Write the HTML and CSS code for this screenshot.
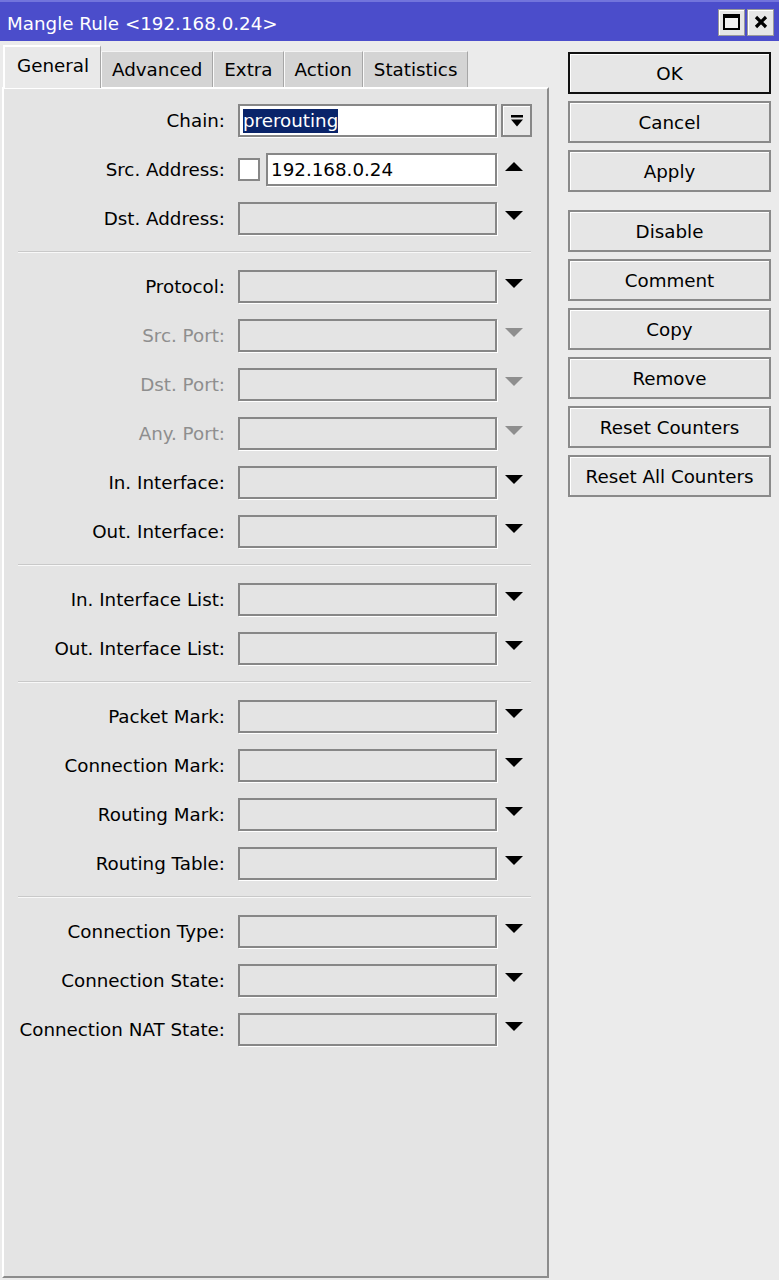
FILE: index.html
```html
<!DOCTYPE html>
<html lang="en">
<head>
    <meta charset="UTF-8">
    <title>Mangle Rule</title>
    <link rel="stylesheet" href="styles.css">
</head>
<body>
    <div class="window">
        <div class="titlebar">
            <span class="title">Mangle Rule &lt;192.168.0.24&gt;</span>
            <div class="win-btns">
                <span class="win-btn"><span class="max-icon"></span></span>
                <span class="win-btn">
                    <svg width="14" height="14" viewBox="0 0 14 14"><path d="M2 2 L12 12 M12 2 L2 12" stroke="#000" stroke-width="3.2"/></svg>
                </span>
            </div>
        </div>

        <div class="body">
            <div class="main">
                <div class="tabs">
                    <span class="tab active">General</span>
                    <span class="tab">Advanced</span>
                    <span class="tab">Extra</span>
                    <span class="tab">Action</span>
                    <span class="tab">Statistics</span>
                </div>

                <div class="panel">
                    <div class="row">
                        <label>Chain:</label>
                        <div class="field white"><span class="selected">prerouting</span></div>
                        <span class="drop-btn">
                            <svg width="14" height="14" viewBox="0 0 14 14"><rect x="1" y="1" width="12" height="2.5" fill="#000"/><path d="M1 5.5 H13 L7 12.5 Z" fill="#000"/></svg>
                        </span>
                    </div>
                    <div class="row">
                        <label>Src. Address:</label>
                        <span class="check"></span>
                        <div class="field white short">192.168.0.24</div>
                        <span class="arrow"><span class="tri up"></span></span>
                    </div>
                    <div class="row">
                        <label>Dst. Address:</label>
                        <div class="field"></div>
                        <span class="arrow"><span class="tri"></span></span>
                    </div>

                    <div class="sep"></div>

                    <div class="row">
                        <label>Protocol:</label>
                        <div class="field"></div>
                        <span class="arrow"><span class="tri"></span></span>
                    </div>
                    <div class="row disabled">
                        <label>Src. Port:</label>
                        <div class="field"></div>
                        <span class="arrow"><span class="tri"></span></span>
                    </div>
                    <div class="row disabled">
                        <label>Dst. Port:</label>
                        <div class="field"></div>
                        <span class="arrow"><span class="tri"></span></span>
                    </div>
                    <div class="row disabled">
                        <label>Any. Port:</label>
                        <div class="field"></div>
                        <span class="arrow"><span class="tri"></span></span>
                    </div>
                    <div class="row">
                        <label>In. Interface:</label>
                        <div class="field"></div>
                        <span class="arrow"><span class="tri"></span></span>
                    </div>
                    <div class="row">
                        <label>Out. Interface:</label>
                        <div class="field"></div>
                        <span class="arrow"><span class="tri"></span></span>
                    </div>

                    <div class="sep"></div>

                    <div class="row">
                        <label>In. Interface List:</label>
                        <div class="field"></div>
                        <span class="arrow"><span class="tri"></span></span>
                    </div>
                    <div class="row">
                        <label>Out. Interface List:</label>
                        <div class="field"></div>
                        <span class="arrow"><span class="tri"></span></span>
                    </div>

                    <div class="sep"></div>

                    <div class="row">
                        <label>Packet Mark:</label>
                        <div class="field"></div>
                        <span class="arrow"><span class="tri"></span></span>
                    </div>
                    <div class="row">
                        <label>Connection Mark:</label>
                        <div class="field"></div>
                        <span class="arrow"><span class="tri"></span></span>
                    </div>
                    <div class="row">
                        <label>Routing Mark:</label>
                        <div class="field"></div>
                        <span class="arrow"><span class="tri"></span></span>
                    </div>
                    <div class="row">
                        <label>Routing Table:</label>
                        <div class="field"></div>
                        <span class="arrow"><span class="tri"></span></span>
                    </div>

                    <div class="sep"></div>

                    <div class="row">
                        <label>Connection Type:</label>
                        <div class="field"></div>
                        <span class="arrow"><span class="tri"></span></span>
                    </div>
                    <div class="row">
                        <label>Connection State:</label>
                        <div class="field"></div>
                        <span class="arrow"><span class="tri"></span></span>
                    </div>
                    <div class="row">
                        <label>Connection NAT State:</label>
                        <div class="field"></div>
                        <span class="arrow"><span class="tri"></span></span>
                    </div>
                </div>
            </div>

            <div class="actions">
                <button class="default">OK</button>
                <button>Cancel</button>
                <button>Apply</button>
                <button class="gap">Disable</button>
                <button>Comment</button>
                <button>Copy</button>
                <button>Remove</button>
                <button>Reset Counters</button>
                <button>Reset All Counters</button>
            </div>
        </div>
    </div>
</body>
</html>
```

FILE: styles.css
```css
:root {
    --bg-color: #e4e4e4;
    --title-color: #4b4dcb;
    --border-color: #878787;
    --disabled-color: #8e8e8e;
}

* {
    box-sizing: border-box;
}

body {
    margin: 0;
    width: 779px;
    height: 1280px;
    overflow: hidden;
    background-color: var(--bg-color);
    font-family: "DejaVu Sans", sans-serif;
    font-size: 18.3px;
    color: #000;
}

.window {
    height: 1280px;
    display: flex;
    flex-direction: column;
}

/* title bar */
.titlebar {
    height: 41px;
    background-color: var(--title-color);
    border-top: 2px solid #7274dc;
    display: flex;
    align-items: center;
    justify-content: space-between;
    padding: 1px 5px 0 7px;
    flex-shrink: 0;
}

.title {
    color: #fff;
    padding-top: 3px;
}

.win-btns {
    display: flex;
    gap: 2px;
}

.win-btn {
    width: 27px;
    height: 27px;
    background-color: #e6e6e6;
    border: 1px solid #9a9a9a;
    box-shadow: inset 1px 1px 0 #fff;
    display: flex;
    align-items: center;
    justify-content: center;
}

.max-icon {
    width: 17px;
    height: 16px;
    border: 2px solid #000;
    border-top-width: 4px;
    background-color: #f2f2f2;
}

.body {
    flex: 1;
    display: flex;
    padding-top: 4px;
    background-color: #ebebeb;
}

.main {
    width: 549px;
    display: flex;
    flex-direction: column;
}

/* tabs */
.tabs {
    display: flex;
    align-items: flex-end;
    height: 42px;
    padding-left: 3px;
}

.tab {
    height: 36px;
    padding: 0 10px;
    display: flex;
    align-items: center;
    background-color: #d4d4d4;
    border-left: 1px solid #fafafa;
    border-right: 1px solid #a6a6a6;
    border-top: 1px solid #f5f5f5;
}

.tab.active {
    height: 43px;
    width: 98px;
    padding: 0 0 4px 12px;
    background-color: #e9e9e9;
    border-left: 2px solid #fff;
    border-top: 2px solid #fff;
    margin-bottom: -1px;
    position: relative;
    z-index: 1;
}

.panel {
    flex: 1;
    margin: 0 0 2px 2px;
    background-color: var(--bg-color);
    border-top: 2px solid #fff;
    border-left: 2px solid #fff;
    border-right: 2px solid #8c8c8c;
    border-bottom: 2px solid #8c8c8c;
    padding-top: 15px;
}

/* form rows */
.row {
    display: flex;
    align-items: center;
    height: 33px;
    margin-bottom: 16px;
}

.row label {
    width: 221px;
    margin-right: 13px;
    text-align: right;
    white-space: nowrap;
}

.row.disabled label {
    color: var(--disabled-color);
}

.field {
    width: 259px;
    height: 33px;
    border: 2px solid var(--border-color);
    background-color: var(--bg-color);
    box-shadow: 1px 1px 0 #fff;
    display: flex;
    align-items: center;
    padding-left: 3px;
    white-space: nowrap;
}

.field.white {
    background-color: #fff;
}

.field.short {
    width: 231px;
}

.selected {
    background-color: #0a246a;
    color: #fff;
    padding: 1px 0;
    line-height: 22px;
}

.check {
    width: 22px;
    height: 23px;
    margin-right: 6px;
    background-color: #fff;
    border: 2px solid var(--border-color);
}

.drop-btn {
    width: 31px;
    height: 33px;
    margin-left: 4px;
    background-color: #e8e8e8;
    border: 2px solid var(--border-color);
    box-shadow: inset 1px 1px 0 #fff;
    display: flex;
    align-items: center;
    justify-content: center;
}

.arrow {
    width: 34px;
    height: 33px;
    display: flex;
    align-items: center;
    justify-content: center;
    padding-bottom: 6px;
}

.tri {
    width: 0;
    height: 0;
    border-left: 9px solid transparent;
    border-right: 9px solid transparent;
    border-top: 9px solid #000;
}

.tri.up {
    border-top: none;
    border-bottom: 9px solid #000;
}

.row.disabled .tri {
    border-top-color: var(--disabled-color);
}

.sep {
    width: 513px;
    height: 2px;
    margin: 2px 0 17px 14px;
    border-top: 1px solid #c9c9c9;
    border-bottom: 1px solid #f8f8f8;
}

/* buttons column */
.actions {
    width: 203px;
    margin-left: 19px;
    padding-top: 7px;
    display: flex;
    flex-direction: column;
    gap: 7px;
}

button {
    height: 42px;
    font-family: "DejaVu Sans", sans-serif;
    font-size: 18.3px;
    color: #000;
    background-color: #e6e6e6;
    border: 2px solid #8a8a8a;
    box-shadow: inset 1px 1px 0 #fff;
    padding: 0;
}

button.default {
    border-color: #111;
}

button.gap {
    margin-top: 11px;
}
```
